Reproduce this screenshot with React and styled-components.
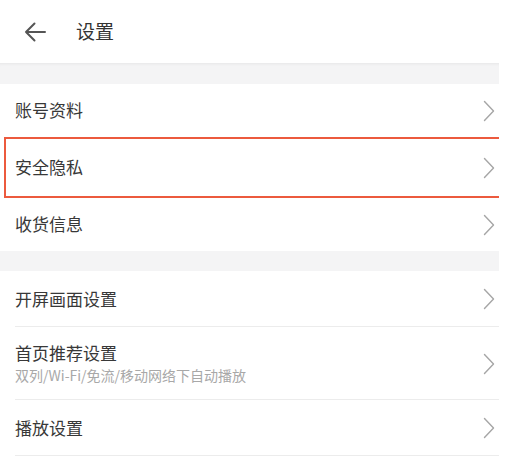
import React from "react";
import styled, { createGlobalStyle } from "styled-components";

const Global = createGlobalStyle`
  html, body { margin: 0; padding: 0; background: #fff; }
  body { font-family: "Noto Sans CJK SC", "Noto Sans", sans-serif; }
`;

const Page = styled.div`
  width: 499px;
  overflow: hidden;
  background: #fff;
`;

const Header = styled.header`
  height: 63px;
  display: flex;
  align-items: center;
  padding-left: 24px;
  gap: 30px;
  box-sizing: border-box;
`;

const Title = styled.h1`
  margin: 0;
  font-size: 19px;
  font-weight: 400;
  color: #333;
  line-height: 1;
  transform: translateY(-1px);
`;

const Band = styled.div`
  height: ${(p) => p.$h}px;
  background: #f4f4f5;
  box-shadow: ${(p) => (p.$shadow ? "inset 0 3px 3px -2px rgba(0,0,0,0.06)" : "none")};
`;

const Group = styled.div`
  display: flex;
  flex-direction: column;
`;

const Row = styled.div`
  position: relative;
  height: ${(p) => p.$h}px;
  display: flex;
  align-items: center;
  padding-left: 15px;
  padding-right: 4px;
  box-sizing: border-box;
  &::after {
    content: "";
    display: ${(p) => (p.$divider ? "block" : "none")};
    position: absolute;
    left: 15px;
    right: 0;
    bottom: 0;
    height: 1px;
    background: #ececec;
  }
`;

const Highlight = styled.div`
  position: absolute;
  left: 4px;
  right: -6px;
  top: 0;
  bottom: 0;
  border: 2.5px solid #ec5a3e;
  pointer-events: none;
`;

const Texts = styled.div`
  flex: 1;
  display: flex;
  flex-direction: column;
  gap: 3px;
`;

const Label = styled.span`
  font-size: 17px;
  color: #383838;
  line-height: 1.2;
`;

const Sub = styled.span`
  font-size: 14px;
  color: #a8a8a8;
  line-height: 1.2;
`;

const Back = () => (
  <svg width="22" height="20" viewBox="0 0 22 20" fill="none">
    <path d="M21 10H2M10.5 1.5L2 10l8.5 8.5" stroke="#555" strokeWidth="2" strokeLinecap="round" strokeLinejoin="round" />
  </svg>
);

const Chevron = () => (
  <svg width="12" height="22" viewBox="0 0 12 22" fill="none">
    <path d="M1.5 1.5L10.5 11L1.5 20.5" stroke="#a6a6a6" strokeWidth="1.4" strokeLinecap="round" strokeLinejoin="round" />
  </svg>
);

export default function App() {
  return (
    <Page>
      <Global />
      <Header>
        <Back />
        <Title>设置</Title>
      </Header>
      <Band $h={21} $shadow />
      <Group>
        <Row $h={53}>
          <Texts><Label>账号资料</Label></Texts>
          <Chevron />
        </Row>
        <Row $h={61}>
          <Highlight />
          <Texts><Label>安全隐私</Label></Texts>
          <Chevron />
        </Row>
        <Row $h={53}>
          <Texts><Label>收货信息</Label></Texts>
          <Chevron />
        </Row>
      </Group>
      <Band $h={20} />
      <Group>
        <Row $h={56} $divider>
          <Texts><Label>开屏画面设置</Label></Texts>
          <Chevron />
        </Row>
        <Row $h={73} $divider>
          <Texts>
            <Label>首页推荐设置</Label>
            <Sub>双列/Wi-Fi/免流/移动网络下自动播放</Sub>
          </Texts>
          <Chevron />
        </Row>
        <Row $h={56} $divider>
          <Texts><Label>播放设置</Label></Texts>
          <Chevron />
        </Row>
      </Group>
    </Page>
  );
}
